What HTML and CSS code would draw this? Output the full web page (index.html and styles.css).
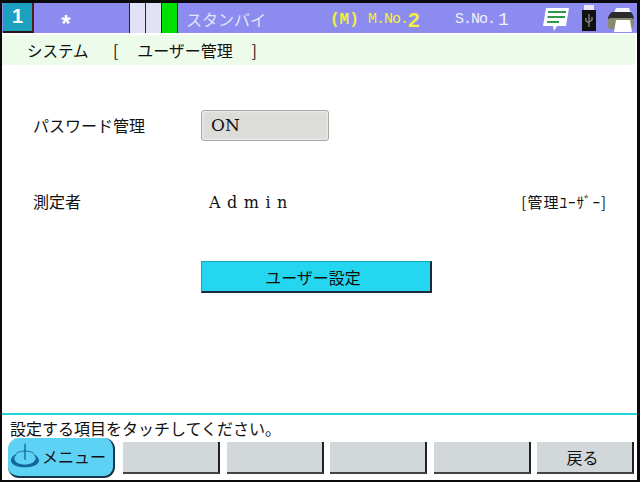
FILE: index.html
```html
<!DOCTYPE html>
<html lang="ja">
<head>
    <meta charset="UTF-8">
    <title>ユーザー管理</title>
    <link rel="stylesheet" href="styles.css">
</head>
<body>
    <div class="screen">
        <div class="status-bar">
            <div class="unit-no">1</div>
            <div class="star">*</div>
            <div class="lamps">
                <span class="lamp"></span>
                <span class="lamp"></span>
                <span class="lamp lamp-on"></span>
            </div>
            <div class="state">スタンバイ</div>
            <div class="mode">(M)</div>
            <div class="mno"><span class="no-label">M.No.</span><span class="mno-val">2</span></div>
            <div class="sno"><span class="no-label">S.No.</span><span class="sno-val">1</span></div>
            <svg class="icon-note" width="26" height="28" viewBox="0 0 26 28">
                <path d="M3 4 L26 4 L23 22 L14 22 L11 27 L10 22 L0 22 Z" fill="#fff"/>
                <path d="M5 8 H23 M4.5 13 H22 M4 18 H16" stroke="#2e9a46" stroke-width="2"/>
            </svg>
            <svg class="icon-usb" width="14" height="28" viewBox="0 0 14 28">
                <rect x="2" y="1" width="10" height="6" fill="#e8e8f4"/>
                <rect x="0" y="6" width="14" height="21" fill="#111"/>
                <path d="M7 10 V23 M4 14 V17 L7 19 M10 13 V16 L7 18" stroke="#8a8a80" stroke-width="1.3" fill="none"/>
            </svg>
            <svg class="icon-printer" width="26" height="26" viewBox="0 0 26 26">
                <path d="M8 1 H21 L23 6 H6 Z" fill="#f4f4fa"/>
                <path d="M4 5 H23 Q26 8 26 12 H0 Q0 8 4 5 Z" fill="#2c2c30"/>
                <rect x="0" y="11" width="26" height="11" rx="3" fill="#8a8a70"/>
                <path d="M8 13 H22 L24 25 H6 Z" fill="#fff"/>
            </svg>
        </div>
        <div class="title-bar">
            <span class="title-main">システム</span>
            <span class="title-sub">
                <span>[</span>
                <span>ユーザー管理</span>
                <span>]</span>
            </span>
        </div>
        <div class="content">
            <div class="row">
                <div class="label">パスワード管理</div>
                <div class="select-box">ON</div>
            </div>
            <div class="row row-user">
                <div class="label">測定者</div>
                <div class="user-name">Admin</div>
                <div class="user-role">[管理ﾕｰｻﾞｰ]</div>
            </div>
            <div class="row row-action">
                <div class="label"></div>
                <div class="action-btn">ユーザー設定</div>
            </div>
        </div>
        <div class="message">設定する項目をタッチしてください。</div>
        <div class="footer">
            <div class="menu-btn">
                <svg class="menu-icon" width="30" height="28" viewBox="0 0 32 28">
                    <path d="M8 12 C3 14 1 17 1 20 C2 25 9 27 16 27 C23 27 30 25 31 20 C31 17 28 14 24 12 C27 15 28 17 27 19 C25 23 20 24 16 24 C12 24 6 23 5 19 C4 17 5 15 8 12 Z" fill="#14669c"/>
                    <path d="M16 2 V19" stroke="#14669c" stroke-width="1.4"/>
                    <path d="M7 12 C12 9 20 9 25 12" stroke="#14669c" stroke-width="1" fill="none"/>
                </svg>
                <span class="menu-text">メニュー</span>
            </div>
            <div class="fkey"></div>
            <div class="fkey"></div>
            <div class="fkey"></div>
            <div class="fkey"></div>
            <div class="fkey fkey-back">戻る</div>
        </div>
    </div>
</body>
</html>
```

FILE: styles.css
```css
html, body {
    margin: 0;
    padding: 0;
}
body {
    width: 640px;
    height: 482px;
    overflow: hidden;
    background: #fff;
    font-family: "Noto Sans CJK JP", "Noto Sans", sans-serif;
    color: #111;
}
.screen {
    box-sizing: border-box;
    width: 640px;
    height: 482px;
    border: solid #0a0a0a;
    border-width: 3px 3px 2px 2px;
    display: flex;
    flex-direction: column;
    background: #fff;
}
.status-bar {
    height: 30px;
    flex: none;
    display: flex;
    align-items: center;
    background: #8c8cf0;
    border-bottom: 2px solid #fff;
}
.unit-no {
    box-sizing: border-box;
    width: 31px;
    height: 30px;
    margin-left: 1px;
    background: #1d9fc0;
    border-right: 2px solid #5a1a1a;
    border-bottom: 2px solid #2a1414;
    color: #fff;
    font: bold 20px/27px "Liberation Sans", sans-serif;
    text-align: center;
}
.star {
    width: 64px;
    height: 24px;
    padding-top: 6px;
    color: #fff;
    font: bold 24px/30px "Liberation Sans", sans-serif;
    text-align: center;
}
.lamps {
    display: flex;
    height: 30px;
    margin-left: 31px;
    border-left: 1px solid #1d1d70;
}
.lamp {
    box-sizing: border-box;
    width: 16px;
    background: #e2e2f6;
    border-right: 1px solid #1d1d70;
}
.lamp-on {
    background: #00e000;
}
.state {
    width: 144px;
    margin-left: 8px;
    padding-top: 2px;
    color: #e4e4fb;
    font-size: 16px;
}
.mode {
    width: 38px;
    padding-top: 3px;
    color: #f2ef3c;
    font: bold 16px "Liberation Mono", monospace;
}
.mno, .sno {
    display: flex;
    align-items: center;
    height: 24px;
    padding-top: 3px;
}
.mno {
    width: 87px;
    color: #f2ef3c;
}
.sno {
    width: 88px;
    color: #f0f0fb;
}
.no-label {
    font: 15px "Liberation Mono", monospace;
    letter-spacing: -1px;
}
.mno-val {
    font: bold 21px "Liberation Sans", sans-serif;
}
.sno-val {
    margin-left: 3px;
    font: 18px "Liberation Mono", monospace;
}
.icon-usb {
    margin-left: 13px;
}
.icon-printer {
    margin-left: 12px;
    margin-top: 3px;
}
.title-bar {
    height: 30px;
    flex: none;
    display: flex;
    align-items: center;
    background: #edfbea;
    margin-right: 2px;
    font-size: 15.5px;
}
.title-main {
    width: 86px;
    margin-left: 25px;
}
.title-sub {
    width: 144px;
    display: flex;
    justify-content: space-between;
    font-size: 16px;
}
.content {
    flex: 1;
    padding: 45px 30px 0 31px;
}
.row {
    display: flex;
    align-items: center;
}
.label {
    width: 168px;
    padding-bottom: 2px;
    font-size: 16px;
}
.select-box {
    box-sizing: border-box;
    width: 128px;
    height: 31px;
    padding-left: 9px;
    background: #dcdcd8;
    border: 1px solid #a8a8a8;
    border-radius: 3px;
    box-shadow: inset 0 0 3px #fff;
    font: 17px/28px "DejaVu Serif", serif;
}
.row-user {
    margin-top: 48px;
}
.user-name {
    flex: 1;
    padding-left: 8px;
    font: 16px "DejaVu Serif", serif;
    letter-spacing: 6.5px;
}
.user-role {
    padding-bottom: 2px;
    font-size: 15px;
    letter-spacing: 1px;
}
.row-action {
    margin-top: 46px;
}
.action-btn {
    box-sizing: border-box;
    width: 231px;
    height: 32px;
    padding-right: 6px;
    background: #24d6f0;
    border-top: 1px solid #12a8bc;
    border-left: 1px solid #12a8bc;
    border-right: 2px solid #1a2a3a;
    border-bottom: 2px solid #1a2a3a;
    font-size: 16px;
    line-height: 30px;
    text-align: center;
}
.message {
    flex: none;
    height: 23px;
    border-top: 2px solid #22d4d4;
    padding-left: 8px;
    font-size: 16px;
    line-height: 26px;
}
.footer {
    flex: none;
    height: 42px;
    display: flex;
    align-items: flex-start;
    gap: 6.5px;
    padding-left: 6px;
}
.menu-btn {
    box-sizing: border-box;
    width: 107px;
    height: 40px;
    margin-right: 1.5px;
    padding-left: 2px;
    display: flex;
    align-items: center;
    background: #5ed2f4;
    border-radius: 11px;
    border-right: 2px solid #15384a;
    border-bottom: 2px solid #15384a;
    font-size: 16px;
}
.menu-icon {
    flex: none;
    margin-bottom: 4px;
}
.menu-text {
    margin-left: 2px;
    padding-bottom: 2px;
}
.fkey {
    box-sizing: border-box;
    width: 97px;
    height: 32px;
    margin-top: 4px;
    background: #d2d7da;
    border-right: 2px solid #222;
    border-bottom: 2px solid #444;
    font-size: 16px;
    line-height: 30px;
    text-align: center;
}
.fkey-back {
    padding-right: 4px;
}
```
